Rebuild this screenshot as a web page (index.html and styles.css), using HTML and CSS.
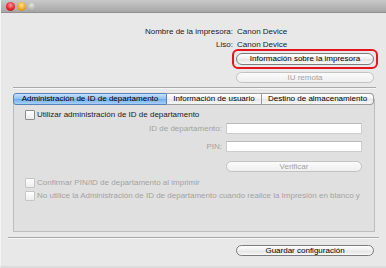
FILE: index.html
```html
<!DOCTYPE html>
<html>
	<head>
		<meta charset="utf-8">
		<title>Canon Device</title>
		<link rel="stylesheet" href="styles.css">
	</head>

	<body>
		<div class="window">
			<div class="titlebar">
				<span class="light close"></span>
				<span class="light min"></span>
				<span class="light zoom"></span>
			</div>

			<div class="info">
				<span class="label">Nombre de la impresora:</span><span>Canon Device</span>
				<span class="label">Liso:</span><span>Canon Device</span>
			</div>

			<div class="actions">
				<div class="focus_ring">
					<button class="btn">Información sobre la impresora</button>
				</div>
				<button class="btn off remote">IU remota</button>
			</div>

			<div class="sep top_sep"></div>

			<div class="tabs">
				<span class="tab selected">Administración de ID de departamento</span>
				<span class="tab user">Información de usuario</span>
				<span class="tab last">Destino de almacenamiento</span>
			</div>

			<div class="panel">
				<label class="check first">
					<span class="box"></span>Utilizar administración de ID de departamento
				</label>

				<div class="field id_row">
					<span class="field_label">ID de departamento:</span>
					<span class="input"></span>
				</div>
				<div class="field pin_row">
					<span class="field_label">PIN:</span>
					<span class="input"></span>
				</div>
				<div class="field verify_row">
					<button class="btn off verify">Verificar</button>
				</div>

				<label class="check off confirm">
					<span class="box"></span>Confirmar PIN/ID de departamento al imprimir
				</label>
				<label class="check off">
					<span class="box"></span>No utilice la Administración de ID de departamento cuando realice la Impresión en blanco y
				</label>
			</div>

			<div class="sep bottom_sep"></div>

			<div class="footer">
				<button class="btn">Guardar configuración</button>
			</div>
		</div>
	</body>
</html>
```

FILE: styles.css
```css
:root {
	--win: #e8e8e8;
	--panel: #e0e0e0;
	--text: #1c1c1c;
	--muted: #a3a3a3;
	--line: #a9a9a9;
}

html, body {
	margin: 0;
	padding: 0;
}

body {
	background-color: var(--win);
	font-family: "Liberation Sans", Arial, sans-serif;
	font-size: 8px;
	color: var(--text);
}

.window {
	width: 386px;
	height: 268px;
	box-sizing: border-box;
	background-color: var(--win);
	border-left: 1px solid #f4f4f4;
	border-bottom: 2px solid #dcdcdc;
	overflow: hidden;
}

.titlebar {
	height: 13px;
	display: flex;
	align-items: center;
	gap: 1.5px;
	padding-left: 5px;
	background: linear-gradient(#c9c9c9, #a6a6a6);
	border-bottom: 1px solid #8f8f8f;
	box-sizing: border-box;
}

.light {
	width: 9px;
	height: 9px;
	border-radius: 50%;
}

.close {
	background: radial-gradient(circle at 50% 35%, #ff9a9a, #e0262b 55%, #a8101a);
}

.min {
	background: radial-gradient(circle at 50% 35%, #ffe39a, #f0a81c 55%, #c07612);
}

.zoom {
	background: radial-gradient(circle at 50% 35%, #e4e4e4, #b4b4b4 60%, #949494);
}

.info {
	display: grid;
	grid-template-columns: 232px auto;
	column-gap: 4px;
	line-height: 13px;
	padding-top: 12px;
}

.label {
	text-align: right;
}

.actions {
	display: flex;
	flex-direction: column;
	align-items: flex-end;
	margin-top: -2px;
	padding-right: 8px;
}

.focus_ring {
	border: 2px solid #e3161f;
	border-radius: 6px;
	padding: 2px;
}

.btn {
	display: block;
	width: 138px;
	height: 12px;
	padding: 0;
	box-sizing: border-box;
	border: 1px solid #7c7c7c;
	border-radius: 6px;
	background: linear-gradient(#ffffff, #eeeeee 50%, #e2e2e2 51%, #f8f8f8);
	font: inherit;
	line-height: 10px;
	color: #000;
}

.btn.off {
	border-color: #c3c3c3;
	background: linear-gradient(#fbfbfb, #efefef);
	color: var(--muted);
}

.remote {
	height: 11px;
	margin-top: 3px;
	margin-right: 4px;
	line-height: 9px;
}

.sep {
	height: 1px;
	background-color: var(--line);
	border-bottom: 1px solid #f6f6f6;
}

.top_sep {
	margin: 4px 10px 0 12px;
}

.tabs {
	position: relative;
	z-index: 1;
	display: flex;
	margin: 4px 0 0 12px;
	height: 12px;
}

.tab {
	box-sizing: border-box;
	height: 12px;
	line-height: 10px;
	text-align: center;
	border: 1px solid #9b9b9b;
	border-left: none;
	background: linear-gradient(#ffffff, #f1f1f1 50%, #e6e6e6 51%, #f7f7f7);
	white-space: nowrap;
	color: #000;
}

.tab.selected {
	width: 154px;
	border: 1px solid #5b82b8;
	border-radius: 3px 0 0 3px;
	background: linear-gradient(#c6e0fb, #90c1f3 50%, #6eaaf0 51%, #a7d2fa);
}

.tab.user {
	width: 95px;
}

.tab.last {
	width: 112px;
	border-radius: 0 4px 4px 0;
}

.panel {
	margin: -6px 11px 0 12px;
	height: 133px;
	box-sizing: border-box;
	padding: 8px 12px 0 11px;
	background-color: var(--panel);
	border: 1px solid #bdbdbd;
	border-top-color: #aaaaaa;
}

.check {
	display: flex;
	align-items: center;
	height: 13px;
	white-space: nowrap;
}

.check.off {
	color: var(--muted);
}

.box {
	flex: none;
	width: 8px;
	height: 8px;
	margin-right: 2px;
	border: 1px solid #8d8d8d;
	border-radius: 1px;
	background: linear-gradient(#ffffff, #ededed);
}

.check.off .box {
	border-color: #c6c6c6;
}

.field {
	display: grid;
	grid-template-columns: 1fr 136px;
	column-gap: 4px;
	align-items: center;
}

.field_label {
	text-align: right;
	color: var(--muted);
}

.input {
	height: 11px;
	box-sizing: border-box;
	background-color: #fff;
	border: 1px solid #cdcdcd;
	border-top-color: #b9b9b9;
}

.id_row {
	margin-top: 2px;
}

.pin_row {
	margin-top: 7px;
}

.verify_row {
	margin-top: 9px;
}

.verify {
	grid-column: 2;
	width: 136px;
	height: 11px;
	line-height: 9px;
}

.confirm {
	margin-top: 4px;
}

.bottom_sep {
	margin: 5px 7px 0 7px;
}

.footer {
	display: flex;
	justify-content: flex-end;
	padding: 6px 12px 0 0;
}

.footer .btn {
	height: 11px;
	line-height: 9px;
}
```
